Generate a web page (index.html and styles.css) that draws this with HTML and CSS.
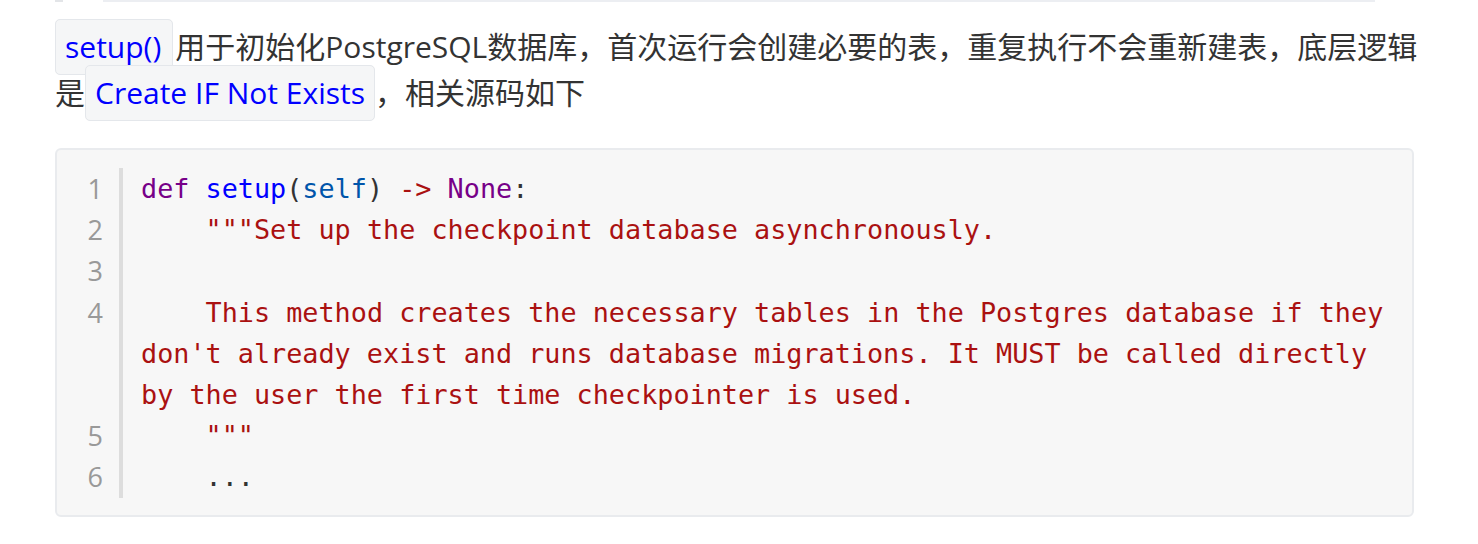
FILE: index.html
```html
<!DOCTYPE html>
<html lang="zh-CN">
<head>
<meta charset="utf-8">
<title>setup</title>
<link rel="stylesheet" href="styles.css">
</head>
<body>
<div class="page">
  <div class="top-rule"><span class="rule-stub"></span><span class="rule-line"></span></div>
  <p class="para"><code class="ic ic-first">setup()</code>用于初始化PostgreSQL数据库，首次运行会创建必要的表，重复执行不会重新建表，底层逻辑是<code class="ic">Create IF Not Exists</code>，相关源码如下</p>
  <div class="fence">
    <div class="ln">1</div><div class="cl"><span class="kw">def</span> <span class="def">setup</span>(<span class="var2">self</span>) <span class="op">-&gt;</span> <span class="kw">None</span>:</div>
    <div class="ln">2</div><div class="cl">    <span class="str">"""Set up the checkpoint database asynchronously.</span></div>
    <div class="ln">3</div><div class="cl"> </div>
    <div class="ln">4</div><div class="cl"><span class="str">    This method creates the necessary tables in the Postgres database if they don't already exist and runs database migrations. It MUST be called directly by the user the first time checkpointer is used.</span></div>
    <div class="ln">5</div><div class="cl">    <span class="str">"""</span></div>
    <div class="ln">6</div><div class="cl">    ...</div>
  </div>
</div>
</body>
</html>
```

FILE: styles.css
```css
html, body {
  margin: 0;
  padding: 0;
  background: #ffffff;
}

.page {
  padding: 0 64px 0 55px;
  font-family: "Open Sans", "Noto Sans CJK SC", sans-serif;
  color: #333333;
}

.top-rule {
  display: flex;
  height: 2px;
  gap: 40px;
}

.rule-stub {
  width: 8px;
  background: #e3e5e8;
}

.rule-line {
  width: 1272px;
  background: #eceef2;
}

.para {
  margin: 22px -20px 0 0;
  font-size: 30px;
  line-height: 46px;
}

.ic {
  font-family: "Open Sans", "Noto Sans CJK SC", sans-serif;
  font-size: 30px;
  color: #0000ff;
  background: #f5f6f7;
  border: 1px solid #e4e7eb;
  border-radius: 5px;
  padding: 6px 9px 7px;
}

.ic-first {
  padding-right: 11px;
  margin-right: 2px;
}

.fence {
  margin-top: 32px;
  width: 1359px;
  box-sizing: border-box;
  background: #f7f7f7;
  border: 2px solid #e9ebee;
  border-radius: 6px;
  padding: 18px 14px 17px 0;
  display: grid;
  grid-template-columns: 66px 1fr;
  font-size: 26.8px;
  line-height: 41.2px;
}

.ln {
  font-family: "Open Sans", sans-serif;
  font-size: 27px;
  color: #999999;
  text-align: right;
  padding-right: 16px;
  border-right: 4px solid #dddddd;
}

.cl {
  font-family: "DejaVu Sans Mono", monospace;
  color: #333333;
  white-space: pre-wrap;
  padding-left: 18px;
}

.kw { color: #770088; }
.def { color: #0000ff; }
.var2 { color: #0055aa; }
.op { color: #aa1111; }
.str { color: #aa1111; }
```
